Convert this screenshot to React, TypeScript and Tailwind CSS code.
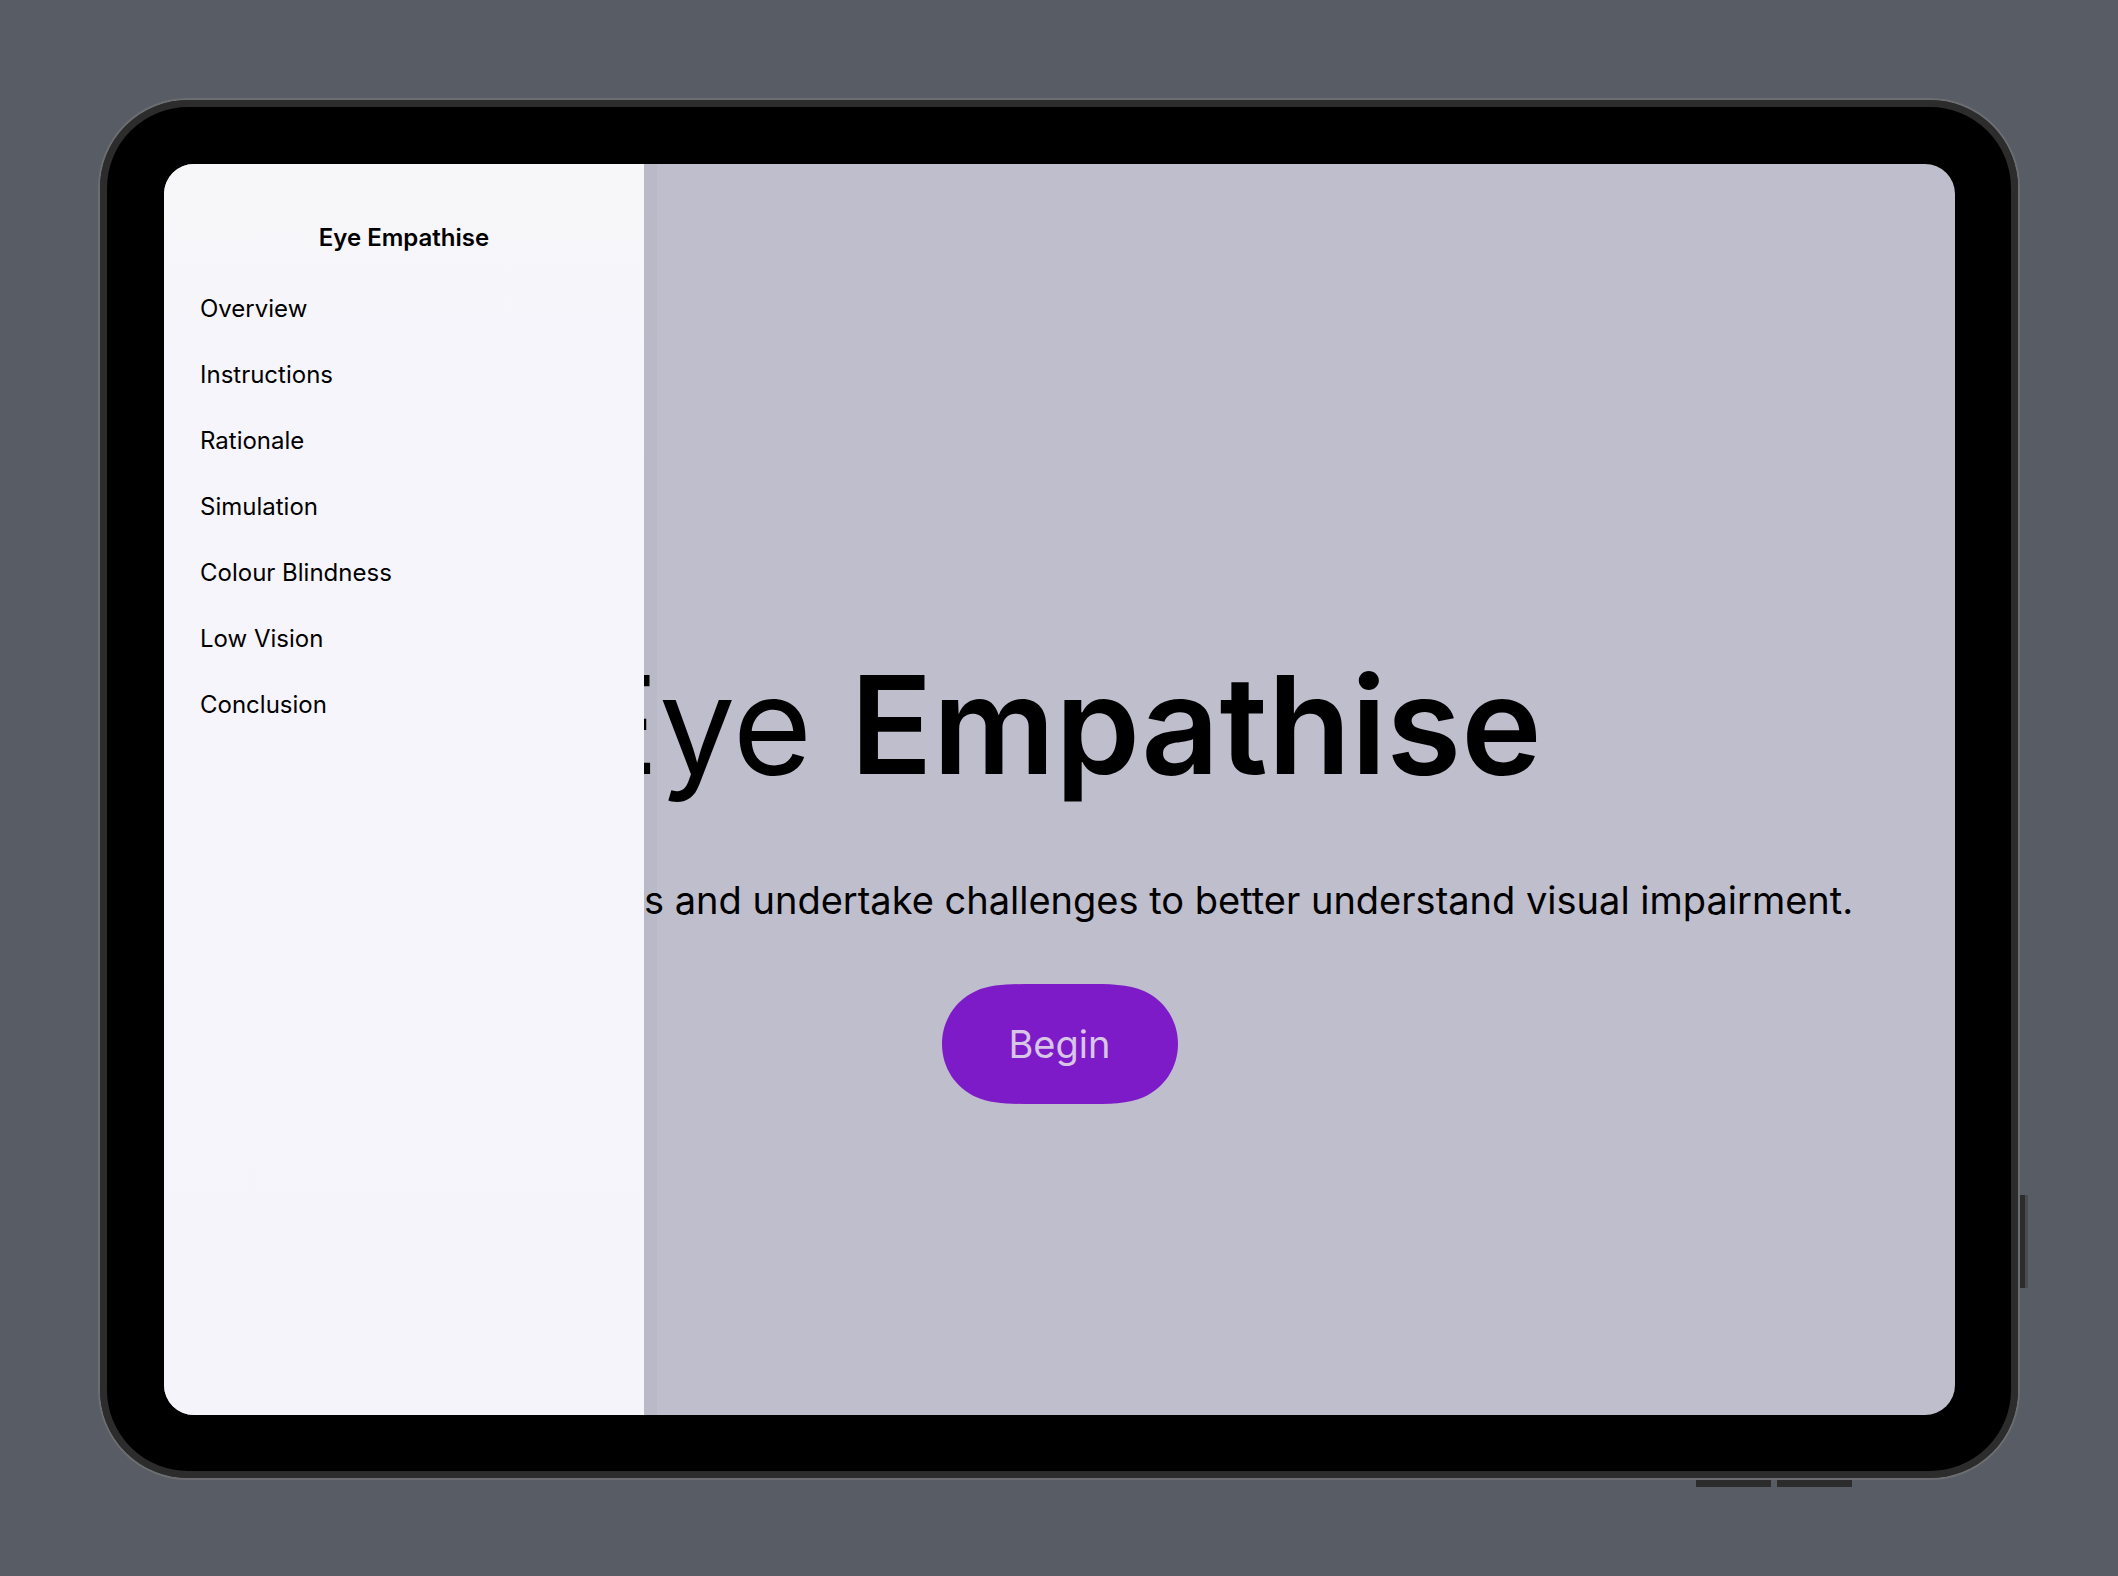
const sections = [
  "Overview",
  "Instructions",
  "Rationale",
  "Simulation",
  "Colour Blindness",
  "Low Vision",
  "Conclusion",
];

function Sidebar() {
  return (
    <aside className="absolute inset-y-0 left-0 flex w-[480px] flex-col bg-linear-to-b from-[#f7f7f9] via-[#f6f5fb] via-15% to-[#f5f4fa] pt-14 shadow-[13px_0_0_rgba(0,0,0,0.025)]">
      <h2 className="text-center text-2xl leading-9 font-semibold">Eye Empathise</h2>
      <nav aria-label="Sections" className="pt-5">
        <ul>
          {sections.map((name) => (
            <li key={name}>
              <a href="#" className="flex h-[66px] items-center px-9 text-2xl">
                {name}
              </a>
            </li>
          ))}
        </ul>
      </nav>
    </aside>
  );
}

/* Pill with continuous-curvature corners */
function Pill() {
  return (
    <svg
      viewBox="0 0 236 120"
      aria-hidden="true"
      className="absolute inset-0 size-full fill-[#7e1bc8]"
    >
      <path d="M0 60C0 36 14 16 34 7C49 0 70 0 92 0H144C166 0 187 0 202 7C222 16 236 36 236 60C236 84 222 104 202 113C187 120 166 120 144 120H92C70 120 49 120 34 113C14 104 0 84 0 60Z" />
    </svg>
  );
}

function Welcome() {
  return (
    <main className="flex flex-1 flex-col items-center justify-center pt-40">
      <h1 className="text-[136px] leading-[180px] whitespace-nowrap">
        Eye <span className="font-semibold">Empathise</span>
      </h1>
      <p className="self-stretch pt-[60px] pl-[480px] text-[38px] leading-[50px] whitespace-nowrap">
        s and undertake challenges to better understand visual impairment.
      </p>
      <button
        type="button"
        className="relative mt-[59px] h-[120px] w-[236px] text-[38px] text-[#d8c6e6]"
      >
        <Pill />
        <span className="relative">Begin</span>
      </button>
    </main>
  );
}

export default function App() {
  return (
    <div className="flex min-h-screen bg-[#585d65] px-[98px] pt-[98px] pb-24 font-['Inter',sans-serif] text-black">
      <div className="relative flex flex-1 rounded-[90px] border-2 border-[#6c6d71] bg-[#2c2c2c]">
        <span className="absolute top-[1095px] -right-[10px] h-[93px] w-2 border-r-3 border-[#4b4b52] bg-[#2c2c2c]" />
        <span className="absolute right-[166px] -bottom-[9px] flex gap-[6px]">
          <span className="h-[7px] w-[75px] bg-[#2c2c2c]" />
          <span className="h-[7px] w-[75px] bg-[#2c2c2c]" />
        </span>
        <div className="flex flex-1 rounded-[88px] border-7 border-[#2c2c2c] bg-black p-[57px] pr-14 pb-14">
          <div className="relative flex flex-1 overflow-hidden rounded-[30px] bg-[#bfbecc]">
            <Welcome />
            <Sidebar />
          </div>
        </div>
      </div>
    </div>
  );
}
